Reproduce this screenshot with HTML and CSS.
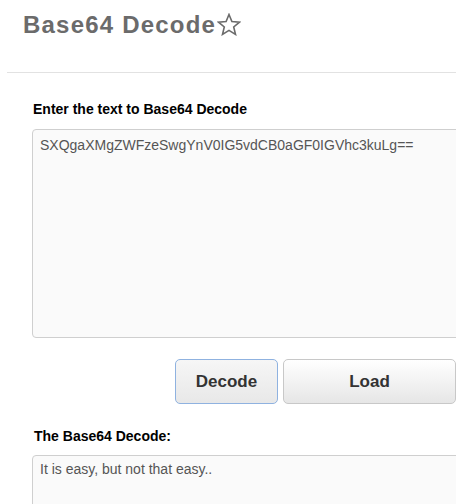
FILE: index.html
```html
<!DOCTYPE html>
<html>
<head>
<meta charset="utf-8">
<link rel="stylesheet" href="styles.css">
</head>
<body>
<div class="page">
  <h1 class="title">Base64 Decode<svg class="star" width="24" height="23" viewBox="0 0 24 23"><polygon points="12,1.5 14.9,8.6 22.5,9.1 16.7,14 18.5,21.4 12,17.4 5.5,21.4 7.3,14 1.5,9.1 9.1,8.6" fill="none" stroke="#6b6b6b" stroke-width="1.6" stroke-linejoin="miter"/></svg></h1>
  <hr class="rule">
  <div class="content">
    <label class="label first">Enter the text to Base64 Decode</label>
    <div class="box input-box">SXQgaXMgZWFzeSwgYnV0IG5vdCB0aGF0IGVhc3kuLg==</div>
    <div class="buttons">
      <button class="btn decode">Decode</button>
      <button class="btn load">Load</button>
    </div>
    <label class="label second">The Base64 Decode:</label>
    <div class="box output-box">It is easy, but not that easy..</div>
  </div>
</div>
</body>
</html>
```
FILE: styles.css
```css
html, body {
  margin: 0;
  padding: 0;
  background: #fff;
  overflow: hidden;
}
body {
  font-family: "Liberation Sans", Arial, sans-serif;
  width: 456px;
  height: 504px;
}
.page {
  width: 456px;
}
.title {
  display: flex;
  align-items: center;
  margin: 0;
  padding: 10px 0 0 23px;
  height: 30px;
  font-size: 24px;
  font-weight: bold;
  letter-spacing: 1.2px;
  color: #6b6b6b;
  line-height: 28px;
}
.star {
  margin-left: 1px;
  margin-top: -1px;
}
.rule {
  margin: 32px 0 0 7px;
  border: 0;
  border-top: 1px solid #e2e2e2;
  height: 0;
}
.content {
  padding-left: 32px;
}
.label {
  display: block;
  font-size: 14px;
  font-weight: bold;
  color: #000;
  line-height: 16px;
}
.label.first {
  margin-top: 28px;
  padding-left: 1px;
}
.box {
  box-sizing: border-box;
  width: 440px;
  border: 1px solid #cfcfcf;
  border-radius: 4px;
  background: #fafafa;
  color: #555;
  font-size: 14px;
  padding: 7px 7px;
  line-height: 16px;
}
.input-box {
  margin-top: 12px;
  height: 209px;
}
.output-box {
  margin-top: 11px;
  height: 60px;
  padding-top: 5px;
}
.buttons {
  display: flex;
  gap: 5px;
  margin-top: 21px;
  padding-left: 143px;
}
.btn {
  height: 45px;
  border: 1px solid #c8c8c8;
  border-radius: 5px;
  background: linear-gradient(#ffffff, #e6e6e6);
  font-family: "Liberation Sans", Arial, sans-serif;
  font-size: 17px;
  font-weight: bold;
  color: #333;
  padding: 0;
}
.decode {
  width: 103px;
  border-color: #8fb2e0;
  background: linear-gradient(#f6f6f6, #e8e8e8);
}
.load {
  width: 173px;
}
.label.second {
  margin-top: 24px;
  padding-left: 2px;
}
```
